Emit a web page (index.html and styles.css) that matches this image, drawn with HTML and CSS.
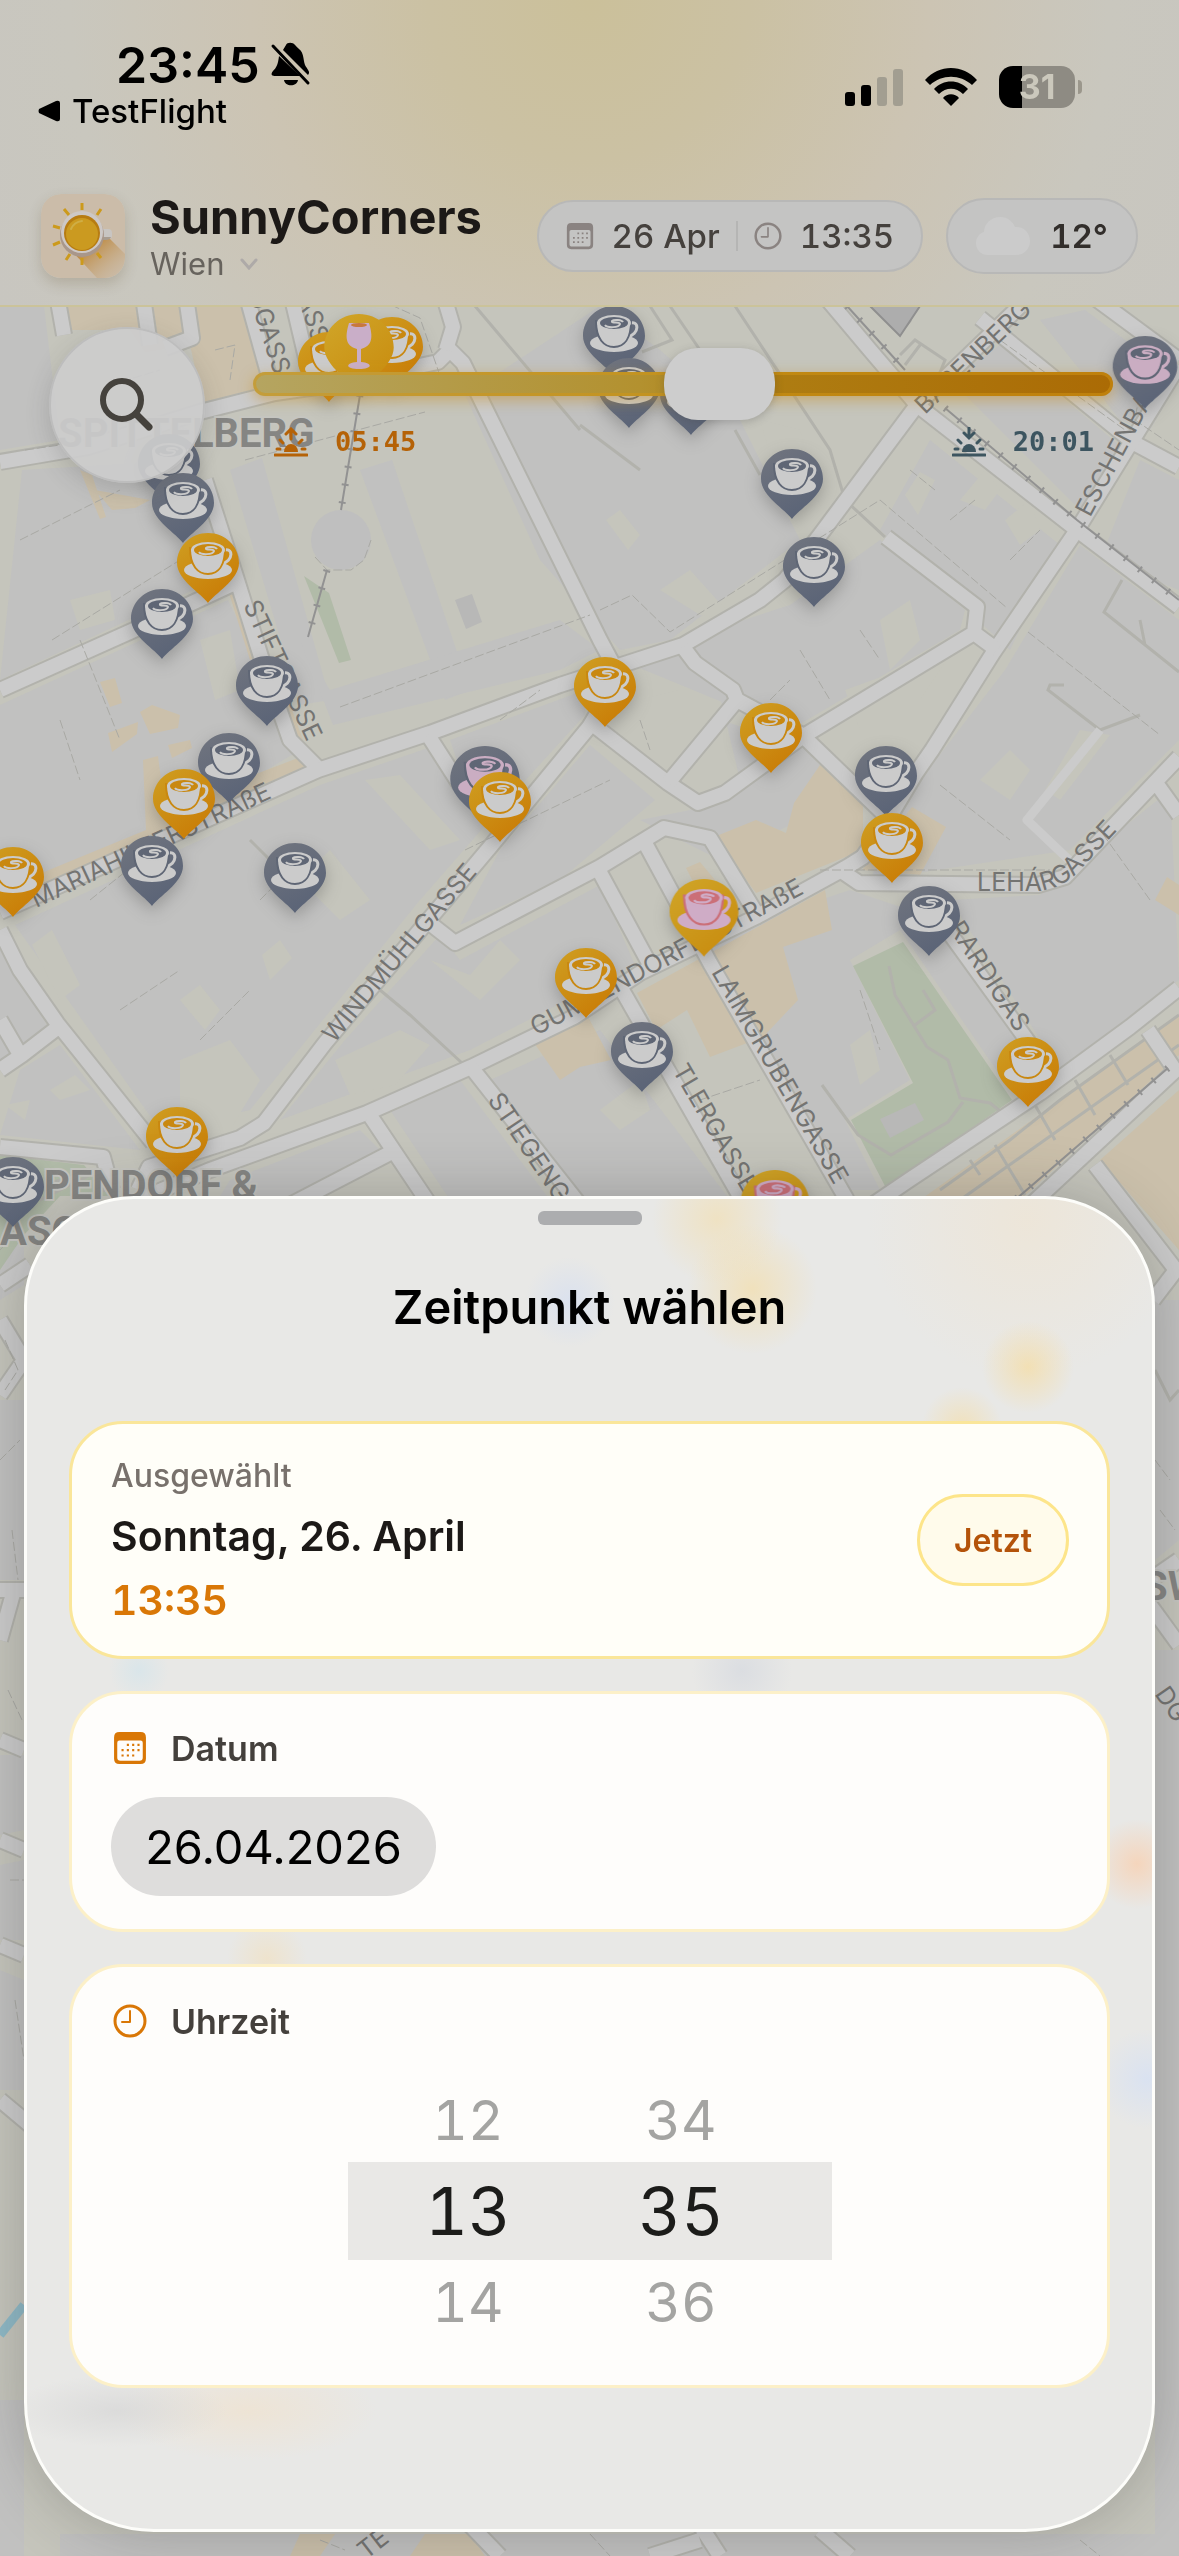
FILE: index.html
```html
<!DOCTYPE html>
<html lang="de">
<head>
<meta charset="utf-8">
<meta name="viewport" content="width=device-width, initial-scale=1">
<title>SunnyCorners</title>
<link rel="stylesheet" href="styles.css">
</head>
<body>
<div class="app">
  <svg class="map" viewBox="0 0 1179 2556" preserveAspectRatio="xMidYMin slice" aria-hidden="true">
    <defs>
      <linearGradient id="sunny" x1="0" y1="0" x2=".7" y2="1"><stop offset="0" stop-color="#cf9f22"/><stop offset="1" stop-color="#c97c06"/></linearGradient>
      <linearGradient id="featured" x1="0" y1="0" x2=".7" y2="1"><stop offset="0" stop-color="#d0a629"/><stop offset="1" stop-color="#c98d10"/></linearGradient>
      <linearGradient id="shady" x1="0" y1="0" x2=".5" y2="1"><stop offset="0" stop-color="#71757f"/><stop offset="1" stop-color="#5b6477"/></linearGradient>
      <path id="drop" d="M0 70C-6 61-31 47-31 30C-31 13-17 0 0 0S31 13 31 30C31 47 6 61 0 70Z"/>
      <g id="cup">
        <ellipse cx="0" cy="37" rx="24" ry="9" fill="var(--cup)"/>
        <path d="M14 18C26 12 26 29 13 31" fill="none" stroke="var(--cup)" stroke-width="3"/>
        <path d="M-18 15C-18 33-10 41 0 41S17 33 17 15Z" fill="var(--cup)" stroke="var(--ink)" stroke-width="2"/>
        <ellipse cx="0" cy="17" rx="17" ry="8" fill="var(--cup)"/>
        <ellipse cx="0" cy="17" rx="14" ry="6" fill="var(--ink)"/>
        <path d="M-9 19C-7 22 5 22 6 18C6 15-3 18-2 15C0 13 8 14 9 16" fill="none" stroke="var(--cup)" stroke-width="2"/>
      </g>
      <g id="pin-sun"><use href="#drop" fill="url(#sunny)"/><use href="#cup"/></g>
      <g id="pin-shade"><use href="#drop" fill="url(#shady)"/><use href="#cup"/></g>
      <g id="pin-top"><use href="#drop" fill="url(#featured)"/><use href="#cup"/></g>
      <g id="roads">
        <path d="M245 290L275 398M290 290L310 375M56 290L64 335M142 290L150 345M185 290L192 338L165 348"/>
        <path d="M0 462L88 447L200 412L275 393L330 385L410 368L438 362L450 350L463 363L486 410L600 640L615 668"/>
        <path d="M442 290L453 327L446 350"/>
        <path d="M205 480L237 580L262 660L290 740L318 768M0 690L134 630L235 583"/>
        <path d="M0 912L150 845L318 770L430 733L560 685L683 645L760 600L785 580L820 535L917 405L870 350L828 300"/>
        <path d="M917 405L1077 530L1179 607M980 318L1134 443L1179 467M1095 298L1179 360M917 405L1020 306"/>
        <path d="M1179 365L1077 530L993 653L932 750L916 773L892 813L863 857"/>
        <path d="M886 537L977 607L974 633L997 650M974 633L802 737L725 793L698 803L668 783L591 723"/>
        <path d="M605 700L589 727L490 847L325 1043L264 1123L240 1138L149 1167L138 1190"/>
        <path d="M683 647L695 663L733 690L737 700L668 783M737 700L802 735L859 790L885 815M428 735L460 785"/>
        <path d="M432 925L455 943L600 867L664 828L710 838L756 913M597 867L649 963M645 843L710 963L847 1200"/>
        <path d="M138 1200L210 1170L367 1113L471 1067L574 1017L640 973L756 917L847 867L863 857L890 820"/>
        <path d="M471 1067L580 1205M371 1117L430 1205M390 1153L290 1205M622 990L745 1205"/>
        <path d="M840 870L859 883L1038 885L1065 877L1179 757M1154 780L1179 815"/>
        <path d="M935 913L1045 1065M1179 1067L1020 1215M1148 1030L1175 1070"/>
        <path d="M1179 988L1130 1027L1040 1093L909 1180L865 1210"/>
        <path d="M1095 1165L1176 1270L1153 1300"/>
        <path d="M0 930L20 970L57 1023L153 1143M0 1070L22 1055L61 1025M0 1020L22 1058M0 1147L103 1157L112 1190"/>
        <path d="M0 1285L30 1265M0 1320L24 1360L0 1395M0 1590H24M14 1590L0 1640M0 1740L24 1750M0 1840L24 1850M0 1945L24 1955M0 2100L30 2125"/>
        <path d="M1150 1605L1179 1645M1179 1560L1150 1580M470 2525L500 2556M650 2556L700 2540M700 2525L720 2556M820 2530L850 2556"/>
      </g>
    </defs>

    <rect width="1179" height="2556" fill="#c5c5bc"/>

    <g class="blocks">
      <path d="M0 306H44L60 440L0 450ZM22 470L190 460L225 575L0 680ZM0 705L228 600L300 750L200 810L0 895ZM15 925L320 785L428 748L490 820L420 900L250 1110L160 1130Z"/>
      <path d="M230 470L262 458L330 700L300 705ZM360 470L392 460L470 690L445 700ZM465 395L600 306L660 350L740 420L800 540L670 640L620 650L540 560Z"/>
      <path d="M333 725L300 640L330 690L560 620L600 650L560 670ZM450 740L585 690L585 715L480 830ZM500 850L590 745L655 800L560 880L460 925Z"/>
      <path d="M345 1040L440 935L460 960L600 885L635 965L470 1050L280 1120ZM620 660L790 605L880 540L965 610L960 630L790 730ZM710 655L745 690L720 720L800 745L850 795L720 860L640 820L690 810L740 780Z"/>
      <path d="M880 530L930 440L1060 545L1010 650ZM1005 670L1080 545L1179 620V740L1070 850L870 880L905 800ZM1100 560L1140 460L1179 480V590ZM950 380L1000 345L1125 450L1080 510ZM1040 320L1085 310L1179 380L1150 430L1120 420Z"/>
      <path d="M700 940L850 890L940 920L1030 1050L1010 1090L900 930L850 960L910 1080L845 1120L880 1190L850 1190ZM950 900L1040 895L1170 790L1179 980L1060 1070ZM490 1080L600 1030L730 1200H580Z"/>
      <path d="M390 1110L460 1080L550 1200H450ZM0 950L50 1030L0 1060ZM20 1070L60 1045L140 1150L0 1135ZM230 1180L360 1130L380 1150L290 1196H220Z"/>
      <path d="M0 1200H24V1285L0 1300ZM0 1400H24V1580H0ZM0 1755H24V1830L0 1835ZM0 1865L24 1860V1940H0ZM0 1970L24 1980V2090H0ZM1155 1300H1179V1540L1155 1560ZM1155 1650H1179V2556H1155ZM0 2400H24V2556H0ZM60 2534H1179V2556H60Z"/>
    </g>
    <g class="yards">
      <path d="M200 640L230 630L240 690L215 700ZM70 600L110 590L115 620L80 630ZM32 945L52 930L80 985L60 1000ZM180 1000L200 985L220 1010L205 1030ZM262 955L280 940L292 958L270 980ZM300 880L330 850L370 900L340 920ZM365 780L400 775L460 840L430 850Z"/>
      <path d="M335 1060L400 1030L430 1045L395 1085L350 1095ZM180 1060L230 1040L260 1080L230 1130L180 1110ZM5 1105L30 1100L25 1120ZM50 1090L75 1075L90 1090L60 1100ZM845 690L900 670L960 640L920 700L860 730ZM960 500L985 470L1000 490L985 510ZM1005 520L1030 500L1040 530L1020 545Z"/>
      <path d="M905 495L920 472L935 480L918 515ZM660 590L690 570L735 620L700 615ZM606 520L620 510L640 535L628 550ZM850 1045L870 1030L880 1070L860 1085ZM1080 730L1110 735L1060 800L1045 790ZM980 780L1010 750L1030 770L1010 800Z"/>
      <path d="M880 620L910 600L920 640L890 670ZM760 420L800 430L820 500L790 520ZM640 700L680 690L690 710L650 740ZM430 960L470 975L500 940L520 960L480 1000ZM600 1110L640 1080L650 1110L620 1130Z"/>
    </g>
    <g class="plaza">
      <path d="M64 306H240L272 390L205 412L190 345L145 352L130 330H70ZM80 470L92 475L106 517L100 519ZM95 490L150 500L135 508L112 510Z"/>
      <path d="M44 872L146 830L143 760L158 756L165 810L214 790L298 758L283 706L290 704L313 768L210 812L42 888ZM140 712L152 705L180 715L178 728L150 734ZM108 733L138 722L137 734L112 752ZM100 682L115 678L122 703L110 707ZM168 745L190 740L192 748L172 758ZM228 590L236 587L260 655L250 660Z"/>
      <path d="M820 765L863 800L863 850L756 893L714 837L756 820L786 833L794 803ZM637 993L825 890L832 930L783 947L798 1000L763 1037L710 1057L687 1010L656 1030ZM532 1040L586 1013L611 1060L580 1067L560 1080ZM912 807L946 827L920 875L862 870Z"/>
      <path d="M1155 900L1167 877L1179 885V915ZM686 868L700 862L715 880L700 895Z"/>
      <path d="M1179 1015L920 1200H1020L1179 1055ZM1100 1160L1179 1090V1250Z"/>
      <path d="M300 2534H335L320 2556H290ZM425 2534H470L485 2556H410Z"/>
    </g>
    <g class="green">
      <path d="M853 966L903 942L1012 1100L886 1188L851 1120L913 1083ZM304 576L329 593L351 660L339 663ZM0 1155L84 1165L110 1196H0ZM0 1196H60L24 1235L0 1270Z"/>
    </g>
    <path d="M880 1119L915 1103L924 1120L890 1138ZM455 600L472 594L482 622L466 629Z" fill="#b8b8b7"/>
    <circle cx="341" cy="540" r="30" fill="#bfbfbf"/>
    <path d="M0 2335L24 2305" stroke="#8fb9c6" stroke-width="9"/>

    <g class="lanes">
      <path d="M889 966L895 995L927 1047L948 1060L960 1098L990 1103L1005 1115M923 990L935 1010L915 1025M963 1102L948 1122L891 1155L858 1135L822 1085"/>
      <path d="M650 306L672 340L642 352M670 306L700 350M735 306L830 450L845 500L885 537M475 306L580 430M735 430L760 475M580 425L640 470"/>
      <path d="M900 355L915 340L945 360L925 410M905 365L920 345M1122 580L1104 612L1179 672M1140 620L1145 645M1064 685L1050 685L1048 690L1100 730L1140 715M250 840L270 860M380 990L410 1015L462 1063"/>
      <path d="M960 1200L1179 1045M940 1190L1010 1140L1060 1100L1179 1015M1035 1105L1055 1140M1075 1080L1095 1115M1110 1055L1128 1085M995 1145L1025 1195M970 1160L980 1175"/>
      <path d="M1155 1370L1170 1400L1179 1390M40 1200L100 1170M20 1195L60 1180"/>
    </g>
    <use href="#roads" class="road-edge"/>
    <use href="#roads" class="road-fill"/>
    <path d="M1069 860L1027 820L1100 730" fill="none" stroke="#cbcbcb" stroke-width="9" stroke-linejoin="round"/>

    <g class="outline">
      <path d="M600 610L632 595L670 632L880 500L1007 608M1028 632L1160 735M25 450L60 445M20 540L120 490M52 640L180 560M110 385L160 370M245 460L425 412M340 707L590 615M465 850L610 780M940 785L1010 840M820 870H1050M1150 900L1100 830"/>
      <path d="M315 557L327 570H351L364 560L371 540M215 350L235 345L230 380M380 300L420 318L445 390M1000 340L1125 430M1145 360L1135 420L1179 450M500 720L540 690M90 900L140 860L150 890M120 1010L180 970M200 1040L250 990M260 900L290 870"/>
      <path d="M900 300L912 320L900 335L870 306M910 470L935 490M950 520L975 500M1010 560L1040 530M770 700L790 680M800 650L830 700M860 630L880 660M640 720L650 750M700 1100L760 1080M860 990L880 1050M60 720L80 780M80 640L120 740"/>
      <path d="M0 1250L20 1230M5 1340L18 1370L5 1390M0 1460L20 1440M12 1530L18 1580M8 1690L22 1720M10 1880H24M15 2000L24 2060M1155 1460L1170 1480M1160 1510L1175 1530M320 2540L345 2550M590 2534L610 2556M1080 2540L1100 2556"/>
    </g>
    <g class="rail">
      <path d="M360 395L341 510M327 570L308 637M847 306L905 370M945 408L1077 520L1179 600M1168 1068L1015 1200"/>
    </g>
    <g class="rail rail-ties">
      <path d="M360 395L341 510M327 570L308 637M847 306L905 370M945 408L1077 520L1179 600M1168 1068L1015 1200"/>
    </g>
    <path d="M870 306L900 336L920 306Z" fill="#adadad" stroke="#8f8f8f" stroke-width="2"/>

    <g class="street">
      <path id="lehar" d="M977 891H1035Q1060 890 1078 872L1165 780" fill="none"/>
      <text transform="translate(334 1044) rotate(-50)">WINDMÜHLGASSE</text>
      <text transform="translate(36 908) rotate(-25)">MARIAHILFERSTRAßE</text>
      <text transform="translate(243 605) rotate(65)">STIFTGASSE</text>
      <text transform="translate(487 1100) rotate(56)">STIEGENG</text>
      <text transform="translate(536 1036) rotate(-28)">GUMPENDORFERSTRAßE</text>
      <text transform="translate(711 972) rotate(60)">LAIMGRUBENGASSE</text>
      <text transform="translate(672 1070) rotate(60)">TLERGASSE</text>
      <text transform="translate(948 928) rotate(57)">RARDIGAS</text>
      <text transform="translate(1090 518) rotate(-62)">ESCHENBA</text>
      <text transform="translate(925 415) rotate(-44)">BABENBERG</text>
      <text transform="translate(232 245) rotate(72)">BURGGASSE</text>
      <text transform="translate(292 280) rotate(72)">GASSE</text>
      <text><textPath href="#lehar">LEHÁRGASSE</textPath></text>
      <text transform="translate(1154 1694) rotate(55)">DG</text>
      <text transform="translate(366 2560) rotate(-38)">TE</text>
    </g>
    <g class="district">
      <text x="58" y="447">SPITTELBERG</text>
      <text x="44" y="1199">PENDORF &amp;</text>
      <text x="0" y="1245">ASCHOF</text>
      <text x="1143" y="1600">SW</text>
    </g>

    <g class="pins">
      <g class="shade">
        <use href="#pin-shade" x="169" y="434"/><use href="#pin-shade" x="183" y="473"/>
        <use href="#pin-shade" x="162" y="589"/><use href="#pin-shade" x="267" y="656"/>
        <use href="#pin-shade" x="229" y="733"/><use href="#pin-shade" x="152" y="836"/>
        <use href="#pin-shade" x="295" y="843"/><use href="#pin-shade" x="13" y="1157"/>
        <use href="#pin-shade" x="614" y="306"/><use href="#pin-shade" x="629" y="358"/>
        <use href="#pin-shade" x="691" y="365"/><use href="#pin-shade" x="792" y="449"/>
        <use href="#pin-shade" x="814" y="537"/><use href="#pin-shade" x="886" y="746"/>
        <use href="#pin-shade" x="929" y="886"/><use href="#pin-shade" x="642" y="1022"/>
      </g>
      <g class="shade pink">
        <use href="#pin-shade" transform="translate(485 746) scale(1.12)"/>
        <use href="#pin-shade" transform="translate(1145 336) scale(1.04)"/>
      </g>
      <g class="sun">
        <use href="#pin-sun" x="208" y="533"/><use href="#pin-sun" x="184" y="769"/>
        <use href="#pin-sun" x="13" y="847"/><use href="#pin-sun" x="500" y="772"/>
        <use href="#pin-sun" x="177" y="1107"/><use href="#pin-sun" x="586" y="948"/>
        <use href="#pin-sun" x="605" y="657"/><use href="#pin-sun" x="771" y="703"/>
        <use href="#pin-sun" x="892" y="813"/><use href="#pin-sun" x="1028" y="1037"/>
        <use href="#pin-sun" x="329" y="332"/><use href="#pin-sun" x="392" y="317"/>
      </g>
      <g class="sun pink">
        <use href="#pin-top" transform="translate(704 879) scale(1.11)"/>
        <use href="#pin-top" transform="translate(775 1170) scale(1.11)"/>
      </g>
      <g transform="translate(359 314)">
        <use href="#drop" fill="url(#featured)" transform="scale(1.12)"/>
        <path d="M-10 9H10C14 22 14 32 2 35L2 48C14 49 14 55 0 55S-14 49-2 48L-2 35C-14 32-14 22-10 9Z" fill="#c9aec8"/>
        <ellipse cx="0" cy="11" rx="8" ry="2" fill="#c8783c"/>
      </g>
    </g>
  </svg>

  <header class="header">
    <div class="status">
      <div class="status-left">
        <div class="clock-row">
          <span class="clock">23:45</span>
          <svg width="42" height="46" viewBox="0 0 42 46" role="img" aria-label="Stumm"><path d="M6 34H30L9 14C8 23 6 26 3 29C0 33 2 34 6 34ZM13 8L38 33C41 30 37 27 35 23C33 17 34 11 29 7C27 5 26 4 25 3C23 0 17 0 16 3C15 5 14 6 13 8ZM14 38H28C27 45 15 45 14 38Z"/><path d="M3 4L38 41" stroke="#000" stroke-width="3" stroke-linecap="round"/></svg>
        </div>
        <a class="back" href="#"><svg width="22" height="22" viewBox="0 0 22 22" aria-hidden="true"><path d="M1 9Q0 11 1 13L18 21Q22 22 22 19V3Q22 0 18 1Z"/></svg>TestFlight</a>
      </div>
      <div class="status-right">
        <svg width="58" height="38" viewBox="0 0 58 38" role="img" aria-label="Empfang"><rect y="24" width="10" height="14" rx="3"/><rect x="16" y="17" width="10" height="21" rx="3"/><g fill="#a29e91"><rect x="32" y="9" width="10" height="29" rx="3"/><rect x="48" y="1" width="10" height="37" rx="3"/></g></svg>
        <svg width="52" height="38" viewBox="0 0 52 38" role="img" aria-label="WLAN"><path d="M0 12C14-4 38-4 52 12L47 17C35 6 17 6 5 17ZM9 21C18 11 34 11 43 21L38 26C31 19 21 19 14 26ZM18 30C22 25 30 25 34 30L26 38Z"/></svg>
        <span class="battery">31</span>
      </div>
    </div>
    <div class="brand-row">
      <svg class="logo" width="84" height="84" viewBox="0 0 84 84" aria-hidden="true">
        <defs><linearGradient id="cast" x1="0" y1="0" x2="1" y2="1"><stop offset=".3" stop-color="#bd8638"/><stop offset="1" stop-color="#cbbca9" stop-opacity=".2"/></linearGradient></defs>
        <rect width="84" height="84" rx="20" fill="#cbbca9"/>
        <path d="M28 54L62 38L84 60V68Q82 84 66 84H56Z" fill="url(#cast)"/>
        <path d="M41 9V16M60 15L56 21M23 15L28 21M12 32L19 34M12 51L19 48M25 66L29 60M41 71V64M60 64L56 59" stroke="#cc9a1c" stroke-width="3"/>
        <path d="M60 35H67Q71 35 71 39V42Q71 45 67 45H60Z" fill="#c8c5c2"/>
        <path d="M60 43H70Q69 46 65 46H60Z" fill="#a79c90"/>
        <circle cx="41" cy="41" r="22" fill="#a9978a"/><circle cx="41" cy="38" r="21" fill="#cdc8c6"/>
        <circle cx="41" cy="39" r="18" fill="#b77c12"/><circle cx="41" cy="40" r="16" fill="#cb9a20"/>
        <path d="M30 35Q33 28 41 27" fill="none" stroke="#cfae45" stroke-width="2" stroke-linecap="round"/>
      </svg>
      <div class="brand">
        <div class="brand-name">SunnyCorners</div>
        <button class="city" type="button">Wien<svg width="18" height="12" viewBox="0 0 18 12" aria-hidden="true"><path d="M2 2L9 10L16 2" fill="none" stroke="#aeaaa8" stroke-width="3" stroke-linecap="round"/></svg></button>
      </div>
      <button class="chip when" type="button">
        <svg width="28" height="28" viewBox="0 0 32 32" aria-hidden="true"><use href="#i-cal"/></svg>
        <span>26 Apr</span><i class="rule"></i>
        <svg width="28" height="28" viewBox="0 0 34 34" aria-hidden="true"><use href="#i-clock"/></svg>
        <span>13:35</span>
      </button>
      <button class="chip weather" type="button">
        <svg width="54" height="38" viewBox="0 0 54 38" aria-hidden="true"><path d="M12 38C4 38 0 32 0 26C0 20 4 16 8 15C8 7 15 0 24 0C32 0 37 5 39 10C47 9 54 15 54 24C54 32 48 38 40 38Z" fill="#cbcbcb"/></svg>
        <span>12°</span>
      </button>
    </div>
  </header>

  <main class="stage">
    <div class="controls">
      <button class="search" type="button" aria-label="Suchen"><svg width="54" height="54" viewBox="0 0 54 54" aria-hidden="true"><circle cx="22" cy="22" r="19" fill="none" stroke="#45423d" stroke-width="6"/><path d="M36 36L49 49" stroke="#45423d" stroke-width="7" stroke-linecap="round"/></svg></button>
      <div class="daylight">
        <input class="range" type="range" min="345" max="1201" value="815" aria-label="Tageszeit">
        <div class="suntimes">
          <span class="sunrise"><svg width="34" height="30" viewBox="0 0 34 30" aria-hidden="true"><use href="#i-half-sun"/><path d="M17 12V3M12 7L17 2L22 7"/></svg>05:45</span>
          <span class="sunset"><svg width="34" height="30" viewBox="0 0 34 30" aria-hidden="true"><use href="#i-half-sun"/><path d="M17 1V10M12 6L17 11L22 6"/></svg>20:01</span>
        </div>
      </div>
    </div>
  </main>

  <section class="sheet" aria-labelledby="sheet-title">
    <div class="grabber"></div>
    <h1 id="sheet-title">Zeitpunkt wählen</h1>
    <div class="card selected">
      <div class="selected-text">
        <div class="caption">Ausgewählt</div>
        <div class="day">Sonntag, 26. April</div>
        <div class="time">13:35</div>
      </div>
      <button class="now" type="button">Jetzt</button>
    </div>
    <div class="card date">
      <label class="field" for="date"><svg width="34" height="34" viewBox="0 0 32 32" aria-hidden="true"><use href="#i-cal"/></svg>Datum</label>
      <input id="date" class="date-input" type="text" value="26.04.2026">
    </div>
    <div class="card hour">
      <div class="field" id="hour-label"><svg width="34" height="34" viewBox="0 0 34 34" aria-hidden="true"><use href="#i-clock"/></svg>Uhrzeit</div>
      <div class="picker" role="group" aria-labelledby="hour-label">
        <button type="button">12</button><button type="button">34</button>
        <div class="band"><button type="button">13</button><button type="button">35</button></div>
        <button type="button">14</button><button type="button">36</button>
      </div>
    </div>
  </section>
</div>

<svg class="sprite" width="0" height="0" aria-hidden="true">
  <symbol id="i-cal" viewBox="0 0 32 32"><path fill="currentColor" fill-rule="evenodd" d="M6 1H26Q31 1 31 6V26Q31 31 26 31H6Q1 31 1 26V6Q1 1 6 1ZM6 9Q4 9 4 11V25Q4 28 7 28H25Q28 28 28 25V11Q28 9 26 9Z"/><path d="M13 13H26M8 18H26M8 23H21" stroke="currentColor" stroke-width="2" stroke-dasharray="2 3" fill="none"/></symbol>
  <symbol id="i-clock" viewBox="0 0 34 34"><circle cx="17" cy="17" r="15" fill="none" stroke="currentColor" stroke-width="3"/><path d="M17 7V18H9" fill="none" stroke="currentColor" stroke-width="2" stroke-linecap="round" stroke-linejoin="round"/></symbol>
  <symbol id="i-half-sun" viewBox="0 0 34 30"><path d="M10 25A7 8 0 0 1 24 25Z" fill="currentColor" stroke="none"/><path d="M1 28H33M3 22H6M28 22H31M6 13L9 16M28 13L25 16"/></symbol>
</svg>
</body>
</html>
```
FILE: styles.css
```css
* { box-sizing: border-box; }

body {
  margin: 0;
  font-family: Inter, "Liberation Sans", sans-serif;
  color: #1c1917;
  background: #c5c5bc;
}

button, input {
  font: inherit;
  color: inherit;
  margin: 0;
  padding: 0;
  border: 0;
  background: none;
}

svg { flex: none; display: block; }

.sprite { position: absolute; }

.app {
  position: relative;
  display: flex;
  flex-direction: column;
  min-height: 100vh;
  overflow: hidden;
}

/* Map */
.map {
  position: absolute;
  inset: 0;
  width: 100%;
  height: 100%;
}

.blocks { fill: #c1c1c0; }
.yards { fill: #c5c5bc; }
.plaza { fill: #cbc0ab; }
.green { fill: #b1bba8; }

.road-edge, .road-fill { fill: none; stroke-linejoin: round; }
.road-edge { stroke: #b2b2ac; stroke-width: 18px; }
.road-fill { stroke: #cbcbcb; stroke-width: 14px; }
.lanes { fill: none; stroke: #b2b2ac; stroke-width: 3px; }
.outline { fill: none; stroke: #a9a9a4; stroke-width: 1px; stroke-dasharray: 9 3; }
.rail { fill: none; stroke: #929292; stroke-width: 2px; }
.rail-ties { stroke-width: 7px; stroke-dasharray: 2 16; }

.street { font-size: 25px; fill: #747472; }
.district {
  font-family: Roboto, sans-serif;
  font-size: 40px;
  font-weight: 700;
  fill: #858583;
  stroke: #c5c5c0;
  stroke-width: 4px;
  paint-order: stroke;
}

.pins { filter: drop-shadow(0 6px 8px rgba(60, 60, 60, .3)); }
.shade { --cup: #cbcbcb; --ink: #5f6675; }
.sun { --cup: #cbcbcb; --ink: #c98810; }
.shade.pink { --cup: #caadc2; }
.sun.pink { --cup: #cfacc6; --ink: #cb6f78; }

/* Header */
.header {
  position: relative;
  height: 307px;
  border-bottom: 2px solid #cbc39a;
  background: radial-gradient(circle at 50% 0, #cbc09a 0, #cbc1a3 160px, #ccc4b3 340px, #c9c7be 520px, #c8c6c0 100%);
}

.status {
  display: flex;
  justify-content: space-between;
  height: 191px;
  padding: 35px 104px 0 38px;
}

.clock-row {
  display: flex;
  align-items: center;
  gap: 10px;
  height: 60px;
  padding-left: 78px;
}

.clock { font-size: 50px; font-weight: 600; color: #000; }

.back {
  display: flex;
  align-items: center;
  gap: 12px;
  height: 32px;
  font-size: 33px;
  font-weight: 500;
  color: #000;
  text-decoration: none;
}

.status-right {
  display: flex;
  align-items: center;
  gap: 22px;
  height: 44px;
  margin-top: 30px;
}

.battery {
  position: relative;
  width: 76px;
  height: 42px;
  border-radius: 14px;
  background: linear-gradient(90deg, #000 23px, #8e8b83 23px);
  color: #cbc8bc;
  font-size: 34px;
  font-weight: 700;
  line-height: 42px;
  text-align: center;
}

.battery::after {
  content: "";
  position: absolute;
  right: -7px;
  top: 14px;
  width: 4px;
  height: 14px;
  border-radius: 0 4px 4px 0;
  background: #9b978c;
}

.brand-row {
  display: flex;
  align-items: center;
  height: 90px;
  padding: 0 41px;
}

.logo { border-radius: 20px; box-shadow: 0 6px 14px rgba(90, 70, 30, .2); }

.brand { flex: 1; margin-left: 25px; }
.brand-name { font-size: 47px; font-weight: 700; line-height: 56px; }
.city {
  display: flex;
  align-items: center;
  gap: 16px;
  font-size: 31px;
  line-height: 38px;
  color: #67635d;
}

.chip {
  display: flex;
  align-items: center;
  border: 2px solid #b8b8b7;
  border-radius: 38px;
  background: #c4c4c3;
  font-size: 33px;
  font-variant-numeric: tabular-nums;
}
.chip svg { color: #8a8381; }
.when { height: 72px; padding: 0 27px; font-weight: 500; color: #45413d; }
.when span { margin-left: 18px; }
.rule { width: 2px; height: 30px; margin: 0 16px; background: #b5b5b4; }
.weather { height: 76px; margin-left: 23px; padding: 0 28px; gap: 20px; font-weight: 600; color: #322e2b; }

/* Controls on the map */
.stage { position: relative; flex: 1; }

.controls {
  display: flex;
  gap: 48px;
  padding: 20px 66px 0 49px;
}

.search {
  display: grid;
  place-items: center;
  flex: none;
  width: 156px;
  height: 156px;
  border: 2px solid #bdbdbd;
  border-radius: 50%;
  background: rgba(204, 204, 204, .92);
  box-shadow: 0 8px 24px rgba(60, 60, 60, .2);
}

.daylight { flex: 1; padding-top: 21px; }

.range {
  display: block;
  appearance: none;
  width: 100%;
  height: 72px;
}
.range::-webkit-slider-runnable-track {
  height: 24px;
  border-radius: 12px;
  background: linear-gradient(90deg, #b5a561, #b3912f 45%, #ae7d12 60%, #ab6b05);
  box-shadow: inset 0 0 0 3px rgba(212, 150, 20, .5), 0 4px 14px rgba(200, 140, 30, .5);
}
.range::-webkit-slider-thumb {
  appearance: none;
  width: 111px;
  height: 72px;
  margin-top: -24px;
  border-radius: 34px;
  background: #cdcdcd;
  box-shadow: 0 2px 8px rgba(60, 60, 60, .25);
}

.suntimes {
  display: flex;
  justify-content: space-between;
  padding: 0 19px 0 21px;
  font-family: "DejaVu Sans Mono", monospace;
  font-size: 27px;
  font-weight: 700;
  line-height: 44px;
}
.suntimes span { display: flex; align-items: center; gap: 27px; }
.suntimes svg { fill: none; stroke: currentColor; stroke-width: 3px; stroke-linecap: round; }
.sunrise { color: #b56207; }
.sunset { color: #3d5560; }

/* Bottom sheet */
.sheet {
  position: relative;
  display: flex;
  flex-direction: column;
  margin: 0 24px 24px;
  padding: 12px 42px 141px;
  border: 3px solid #fdfdfa;
  border-radius: 110px 110px 130px 130px;
  background:
    radial-gradient(circle at 690px 20px, rgba(246, 220, 160, .5), transparent 65px),
    radial-gradient(circle at 725px 90px, rgba(246, 220, 160, .6), transparent 65px),
    radial-gradient(circle at 1001px 168px, rgba(246, 220, 160, .7), transparent 46px),
    radial-gradient(circle at 935px 228px, rgba(246, 220, 160, .6), transparent 40px),
    radial-gradient(circle at 543px 103px, rgba(212, 222, 242, .7), transparent 45px),
    radial-gradient(circle at 1000px 20px, rgba(240, 228, 208, .6), transparent 160px),
    radial-gradient(circle at 1110px 665px, rgba(250, 205, 170, .7), transparent 45px),
    radial-gradient(circle at 112px 472px, rgba(208, 228, 236, .6), transparent 30px),
    radial-gradient(circle at 715px 472px, rgba(210, 214, 222, .6), transparent 50px),
    radial-gradient(circle at 1120px 880px, rgba(208, 222, 248, .6), transparent 50px),
    radial-gradient(circle at 240px 760px, rgba(244, 222, 180, .5), transparent 40px),
    radial-gradient(ellipse 110px 36px at 90px 1212px, rgba(214, 214, 214, .7), transparent),
    radial-gradient(ellipse 130px 50px at 220px 1212px, rgba(240, 226, 206, .7), transparent),
    #e8e8e6;
  box-shadow: 0 0 60px rgba(40, 40, 40, .25);
}

.grabber {
  align-self: center;
  width: 104px;
  height: 14px;
  border-radius: 6px;
  background: #acadaf;
}

h1 {
  margin: 52px 0 84px;
  font-size: 47px;
  font-weight: 600;
  line-height: 60px;
  text-align: center;
  color: #000;
}

.card {
  display: flex;
  flex-direction: column;
  align-items: flex-start;
  margin-bottom: 32px;
  padding: 33px 39px;
  border: 3px solid #fcf0c8;
  border-radius: 54px;
  background: #fefdfb;
}
.card:last-child { margin-bottom: 0; }

.selected {
  flex-direction: row;
  align-items: center;
  justify-content: space-between;
  padding: 32px 38px 32px 39px;
  border-color: #fae69a;
  background: #fffef8;
}
.selected-text { display: grid; gap: 14px; }
.caption { font-size: 32px; font-weight: 500; line-height: 40px; color: #78716c; }
.day { font-size: 41px; font-weight: 600; line-height: 52px; }
.time { font-size: 41px; font-weight: 600; line-height: 48px; font-variant-numeric: tabular-nums; color: #d97706; }

.now {
  width: 152px;
  height: 92px;
  border: 3px solid #fde58a;
  border-radius: 46px;
  background: #fffbeb;
  font-size: 32px;
  font-weight: 600;
  color: #b4530a;
}

.field {
  display: flex;
  align-items: center;
  gap: 24px;
  height: 42px;
  padding-left: 2px;
  font-size: 34px;
  font-weight: 600;
  color: #44403c;
}
.field svg { color: #d97706; }

.date-input {
  width: 325px;
  height: 99px;
  margin-top: 28px;
  border-radius: 50px;
  background: #dedddc;
  font-size: 47px;
  text-align: center;
  color: #000;
}

.hour { align-items: stretch; padding-bottom: 41px; }

.picker {
  display: grid;
  grid-template-columns: 213px 213px;
  grid-template-rows: 84px 98px 84px;
  align-self: center;
  margin-top: 36px;
  padding: 0 44px 0 14px;
  font-variant-numeric: tabular-nums;
}
.picker button { font-size: 55px; line-height: 84px; color: #a4a4a2; }
.picker .band {
  grid-column: 1 / -1;
  display: grid;
  grid-template-columns: 213px 213px;
  margin: 0 -44px 0 -14px;
  padding-left: 14px;
  background: #e9e8e6;
}
.picker .band button { font-size: 66px; line-height: 98px; color: #1c1c1a; }
```
